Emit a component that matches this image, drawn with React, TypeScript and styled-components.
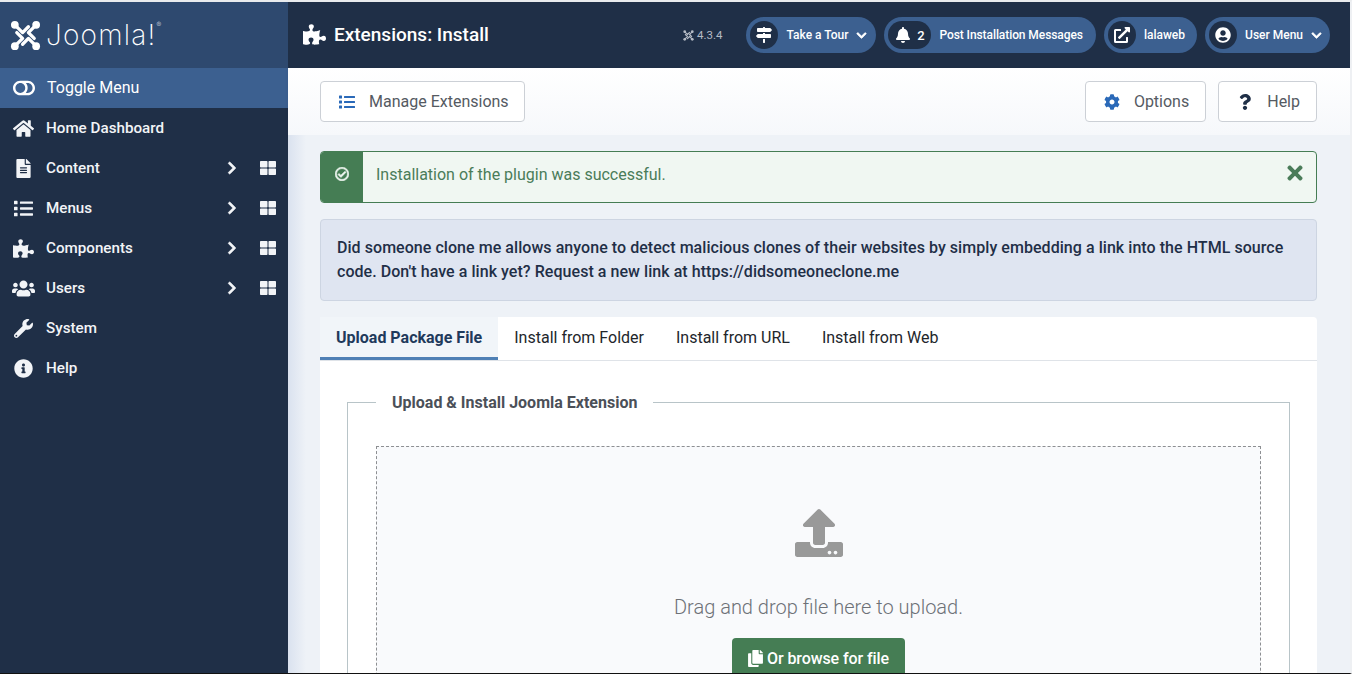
import React from "react";
import styled, { createGlobalStyle } from "styled-components";
import {
  FaBell,
  FaChevronDown,
  FaChevronRight,
  FaCog,
  FaCopy,
  FaExternalLinkAlt,
  FaFileAlt,
  FaHome,
  FaInfoCircle,
  FaList,
  FaMapSigns,
  FaPuzzlePiece,
  FaQuestion,
  FaRegCheckCircle,
  FaThLarge,
  FaTimes,
  FaToggleOff,
  FaUpload,
  FaUserCircle,
  FaUsers,
  FaWrench
} from "react-icons/fa";

const GlobalStyle = createGlobalStyle`
  html, body {
    margin: 0;
    height: 100%;
    overflow: hidden;
  }
  body {
    font-family: Roboto, "Liberation Sans", sans-serif;
    background: #eef2f7;
  }
  * { box-sizing: border-box; }
`;

const Page = styled.div`
  height: 674px;
  width: 1352px;
  display: flex;
  flex-direction: column;
  overflow: hidden;
  border-top: 2px solid #e9ebed;
  border-right: 2px solid #eef0f3;
  border-bottom: 1px solid #111;
`;

const Shell = styled.div`
  flex: 1;
  min-height: 0;
  display: flex;
`;

const Sidebar = styled.aside`
  width: 288px;
  flex: none;
  background: #1f2f47;
  color: #fff;
`;

const LogoBar = styled.div`
  height: 66px;
  background: #2e496f;
  display: flex;
  align-items: center;
  padding-left: 10px;
  gap: 5px;
`;

const LogoWord = styled.span`
  font-family: Inter, sans-serif;
  font-weight: 200;
  font-size: 28px;
  letter-spacing: 1.2px;
  line-height: 1;
`;

const LogoMark = styled.sup`
  font-size: 7px;
  vertical-align: 18px;
  line-height: 0;
  letter-spacing: 0;
`;

const ToggleRow = styled.div`
  height: 40px;
  background: #3c6090;
  display: flex;
  align-items: center;
  padding: 0 0 1px 13px;
  font-size: 16px;
  gap: 12px;
  svg { font-size: 22px; }
`;

const MenuItem = styled.div`
  height: 40px;
  display: flex;
  align-items: center;
  font-size: 15.2px;
  font-weight: 500;
  color: #f2f4f7;
`;

const MenuIcon = styled.span<{ $size: number }>`
  width: 47px;
  margin-right: -1px;
  flex: none;
  display: flex;
  align-items: center;
  justify-content: center;
  font-size: ${(p) => p.$size}px;
`;

const MenuLabel = styled.span`
  flex: 1;
`;

const MenuArrow = styled.span`
  width: 36px;
  display: flex;
  font-size: 14px;
  padding-left: 2px;
  svg { stroke: currentColor; stroke-width: 24px; }
`;

const MenuGrid = styled.span`
  width: 29px;
  font-size: 16px;
  display: flex;
  padding-left: 1px;
`;

const Main = styled.main`
  flex: 1;
  min-width: 0;
  display: flex;
  flex-direction: column;
`;

const Header = styled.header`
  height: 66px;
  flex: none;
  background: #1f2f47;
  color: #fff;
  display: flex;
  align-items: center;
  padding-left: 15px;
  padding-right: 20px;
`;

const PageTitle = styled.h1`
  margin: 0 0 2px;
  flex: 1;
  font-size: 19px;
  font-weight: 500;
  display: flex;
  align-items: center;
  gap: 8px;
  svg { font-size: 23px; }
`;

const Version = styled.span`
  font-size: 11.5px;
  color: #b4bac4;
  display: flex;
  align-items: center;
  gap: 3px;
  margin-right: 16px;
`;

const Pill = styled.div<{ $end: number }>`
  height: 36px;
  border-radius: 18px;
  background: #3c6090;
  display: flex;
  align-items: center;
  padding: 0 ${(p) => p.$end}px 0 4px;
  font-size: 12px;
  font-weight: 500;
  margin-left: 8px;
  > svg { margin-left: 8px; font-size: 11px; stroke: currentColor; stroke-width: 30px; }
`;

const PillIcon = styled.span<{ $wide?: boolean }>`
  height: 28px;
  width: ${(p) => (p.$wide ? "43px" : "28px")};
  border-radius: 14px;
  background: #1f2f47;
  display: flex;
  align-items: center;
  justify-content: center;
  gap: 6px;
  font-size: 13px;
  margin-right: 8px;
  svg { font-size: 16px; }
`;

const TightText = styled.span`
  letter-spacing: -0.08px;
`;

const Toolbar = styled.div`
  height: 67px;
  flex: none;
  background: linear-gradient(#fff, #f6f8fb);
  box-shadow: 0 1px 3px rgba(30, 50, 80, 0.1);
  display: flex;
  align-items: center;
  padding: 0 33px 0 32px;
  gap: 12px;
`;

const ToolButton = styled.button<{ $end?: number }>`
  height: 41px;
  background: #fff;
  border: 1px solid #ccd0d6;
  border-radius: 4px;
  padding: 0 ${(p) => p.$end ?? 16}px 0 18px;
  display: flex;
  align-items: center;
  gap: 14px;
  font-family: inherit;
  font-size: 16px;
  color: #555a62;
  svg { font-size: 16px; color: #2a69b8; }
`;

const DarkGlyph = styled.span`
  display: flex;
  svg { color: #1f2f47; }
`;

const Spacer = styled.div`
  flex: 1;
`;

const Content = styled.div`
  flex: 1;
  min-height: 0;
  overflow: hidden;
  padding: 16px 33px 0 32px;
  background: linear-gradient(90deg, #dae2ef 0, #eef2f7 18px);
`;

const SuccessAlert = styled.div`
  height: 52px;
  border: 1px solid #457d54;
  border-radius: 4px;
  background: #f0f7f2;
  display: flex;
  align-items: center;
  color: #4a7c59;
  font-size: 16px;
  overflow: hidden;
`;

const AlertIcon = styled.span`
  width: 42px;
  height: 100%;
  background: #457d54;
  color: #f0f7f2;
  display: flex;
  align-items: center;
  justify-content: center;
  font-size: 14px;
  padding-bottom: 6px;
  margin-right: 13px;
  svg { stroke: currentColor; stroke-width: 24px; }
`;

const AlertText = styled.span`
  flex: 1;
  padding-bottom: 6px;
`;

const AlertClose = styled.span`
  display: flex;
  font-size: 22px;
  margin-right: 10px;
  margin-bottom: 9px;
`;

const InfoNote = styled.div`
  margin-top: 16px;
  height: 82px;
  padding: 16px 16px 0;
  background: #dfe5f1;
  border: 1px solid #cdd5e2;
  border-radius: 4px;
  color: #1f2f47;
  font-size: 16px;
  font-weight: 500;
  line-height: 24px;
  letter-spacing: 0.05px;
`;

const TabPanel = styled.section`
  margin-top: 16px;
  background: #fff;
  border-radius: 4px 4px 0 0;
`;

const TabList = styled.div`
  height: 44px;
  display: flex;
  border-bottom: 1px solid #dfe3e8;
`;

const Tab = styled.div<{ $active?: boolean }>`
  padding: 0 16px;
  display: flex;
  align-items: center;
  height: ${(p) => (p.$active ? "43px" : "40px")};
  font-size: 16px;
  font-weight: ${(p) => (p.$active ? 700 : 400)};
  color: ${(p) => (p.$active ? "#1f3a5c" : "#22262b")};
  background: ${(p) => (p.$active ? "#f1f5f9" : "transparent")};
  border-bottom: ${(p) => (p.$active ? "3px solid #4f80b5" : "none")};
`;

const TabBody = styled.div`
  padding: 32px 27px 0;
`;

const Group = styled.fieldset`
  margin: 0;
  padding: 34px 28px 0;
  border: 1px solid #b8c4c8;
  border-bottom: none;
  min-width: 0;
`;

const GroupTitle = styled.legend`
  padding: 0 16px;
  font-size: 16px;
  font-weight: 700;
  color: #4b5058;
`;

const DropZone = styled.div`
  height: 260px;
  background: #f9fafc;
  border: 1px dashed #8d8f92;
  border-bottom: none;
  display: flex;
  flex-direction: column;
  align-items: center;
  padding-top: 62px;
`;

const UploadGlyph = styled.span`
  display: flex;
  font-size: 48px;
  color: #999;
`;

const DropText = styled.p`
  margin: 38px 0 0;
  font-size: 20px;
  font-weight: 300;
  color: #6d7177;
`;

const BrowseButton = styled.button`
  margin-top: 19px;
  height: 40px;
  padding: 0 16px;
  border: 0;
  border-radius: 4px;
  background: #457d54;
  color: #fff;
  font-family: inherit;
  font-size: 16px;
  font-weight: 500;
  letter-spacing: -0.1px;
  display: flex;
  align-items: center;
  gap: 4px;
  svg { font-size: 17px; width: 15px; }
`;

const JoomlaIcon = ({ size }: { size: number }) => (
  <svg
    width={size}
    height={size}
    viewBox="0 0 32 32"
    fill="none"
    stroke="currentColor"
    strokeWidth={3.4}
    strokeLinejoin="round"
    strokeLinecap="round"
  >
    <path d="M6 6 L13 13 L19 7" />
    <path d="M26 6 L19 13 L25 19" />
    <path d="M26 26 L19 19 L13 25" />
    <path d="M6 26 L13 19 L7 13" />
    <g fill="currentColor" stroke="none">
      <circle cx="5" cy="5" r="4" />
      <circle cx="27" cy="5" r="4" />
      <circle cx="5" cy="27" r="4" />
      <circle cx="27" cy="27" r="4" />
    </g>
  </svg>
);

const menu = [
  { label: "Home Dashboard", icon: <FaHome />, size: 21 },
  { label: "Content", icon: <FaFileAlt />, size: 19, sub: true },
  { label: "Menus", icon: <FaList />, size: 19, sub: true },
  { label: "Components", icon: <FaPuzzlePiece />, size: 21, sub: true },
  { label: "Users", icon: <FaUsers />, size: 23, sub: true },
  { label: "System", icon: <FaWrench />, size: 19 },
  { label: "Help", icon: <FaInfoCircle />, size: 19 }
];

const tabs = ["Upload Package File", "Install from Folder", "Install from URL", "Install from Web"];

const App: React.FC = () => {
  return (
    <Page>
      <GlobalStyle />
      <Shell>
        <Sidebar>
          <LogoBar>
            <JoomlaIcon size={31} />
            <LogoWord>
              Joomla!<LogoMark>®</LogoMark>
            </LogoWord>
          </LogoBar>
          <ToggleRow>
            <FaToggleOff />
            Toggle Menu
          </ToggleRow>
          {menu.map((item) => (
            <MenuItem key={item.label}>
              <MenuIcon $size={item.size}>{item.icon}</MenuIcon>
              <MenuLabel>{item.label}</MenuLabel>
              {item.sub && (
                <>
                  <MenuArrow>
                    <FaChevronRight />
                  </MenuArrow>
                  <MenuGrid>
                    <FaThLarge />
                  </MenuGrid>
                </>
              )}
            </MenuItem>
          ))}
        </Sidebar>
        <Main>
          <Header>
            <PageTitle>
              <FaPuzzlePiece />
              Extensions: Install
            </PageTitle>
            <Version>
              <JoomlaIcon size={11} /> 4.3.4
            </Version>
            <Pill $end={9}>
              <PillIcon>
                <FaMapSigns />
              </PillIcon>
              Take a Tour
              <FaChevronDown />
            </Pill>
            <Pill $end={13}>
              <PillIcon $wide>
                <FaBell />2
              </PillIcon>
              <TightText>Post Installation Messages</TightText>
            </Pill>
            <Pill $end={12}>
              <PillIcon>
                <FaExternalLinkAlt />
              </PillIcon>
              lalaweb
            </Pill>
            <Pill $end={8}>
              <PillIcon>
                <FaUserCircle />
              </PillIcon>
              User Menu
              <FaChevronDown />
            </Pill>
          </Header>
          <Toolbar>
            <ToolButton $end={15}>
              <FaList />
              Manage Extensions
            </ToolButton>
            <Spacer />
            <ToolButton>
              <FaCog />
              Options
            </ToolButton>
            <ToolButton>
              <DarkGlyph>
                <FaQuestion />
              </DarkGlyph>
              Help
            </ToolButton>
          </Toolbar>
          <Content>
            <SuccessAlert>
              <AlertIcon>
                <FaRegCheckCircle />
              </AlertIcon>
              <AlertText>Installation of the plugin was successful.</AlertText>
              <AlertClose>
                <FaTimes />
              </AlertClose>
            </SuccessAlert>
            <InfoNote>
              Did someone clone me allows anyone to detect malicious clones of their websites by simply embedding a
              link into the HTML source code. Don't have a link yet? Request a new link at https://didsomeoneclone.me
            </InfoNote>
            <TabPanel>
              <TabList>
                {tabs.map((tab, i) => (
                  <Tab key={tab} $active={i === 0}>
                    {tab}
                  </Tab>
                ))}
              </TabList>
              <TabBody>
                <Group>
                  <GroupTitle>Upload &amp; Install Joomla Extension</GroupTitle>
                  <DropZone>
                    <UploadGlyph>
                      <FaUpload />
                    </UploadGlyph>
                    <DropText>Drag and drop file here to upload.</DropText>
                    <BrowseButton>
                      <FaCopy />
                      Or browse for file
                    </BrowseButton>
                  </DropZone>
                </Group>
              </TabBody>
            </TabPanel>
          </Content>
        </Main>
      </Shell>
    </Page>
  );
};

export default App;
